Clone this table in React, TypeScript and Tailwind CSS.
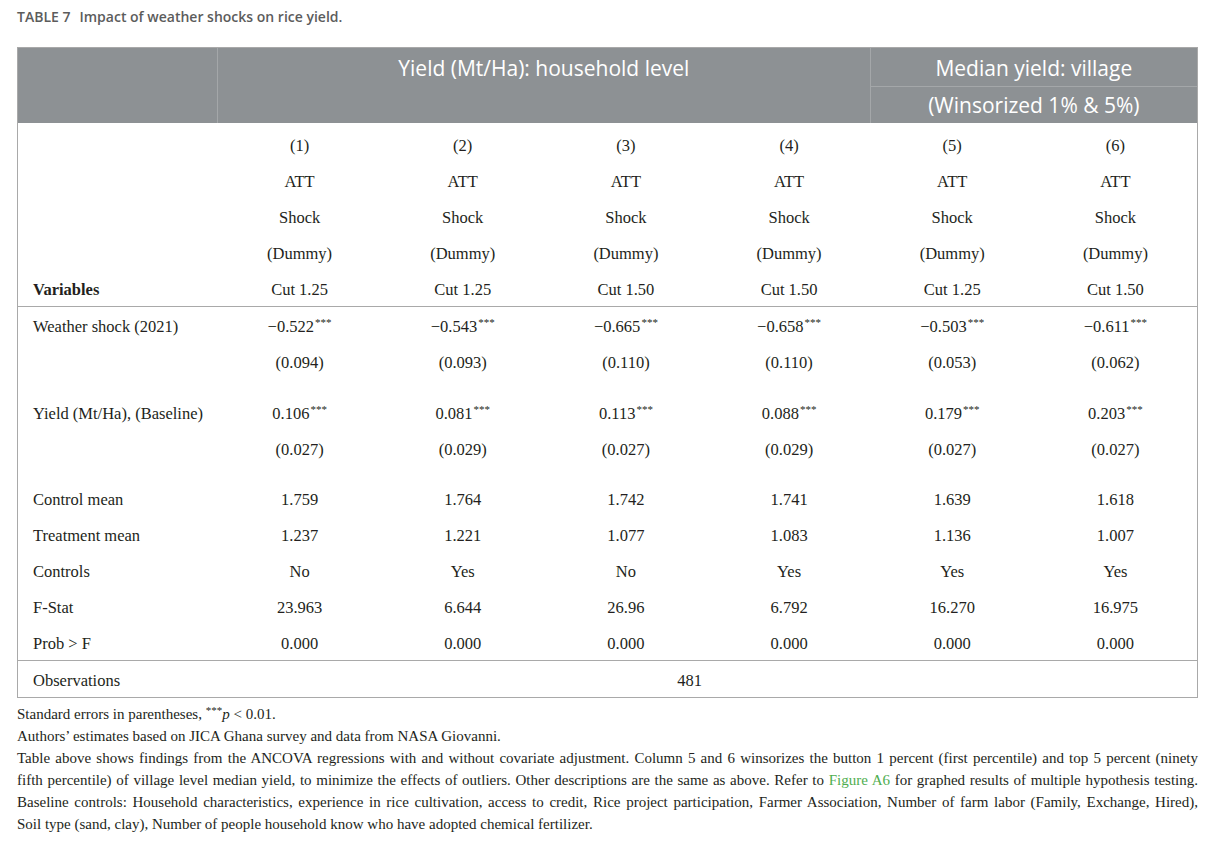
const heads = ["(1)", "(2)", "(3)", "(4)", "(5)", "(6)"];
const cuts = ["Cut 1.25", "Cut 1.25", "Cut 1.50", "Cut 1.50", "Cut 1.25", "Cut 1.50"];

const coefs = [
  {
    label: "Weather shock (2021)",
    vals: ["\u22120.522", "\u22120.543", "\u22120.665", "\u22120.658", "\u22120.503", "\u22120.611"],
    se: ["(0.094)", "(0.093)", "(0.110)", "(0.110)", "(0.053)", "(0.062)"],
  },
  {
    label: "Yield (Mt/Ha), (Baseline)",
    vals: ["0.106", "0.081", "0.113", "0.088", "0.179", "0.203"],
    se: ["(0.027)", "(0.029)", "(0.027)", "(0.029)", "(0.027)", "(0.027)"],
  },
];

const stats = [
  { label: "Control mean", vals: ["1.759", "1.764", "1.742", "1.741", "1.639", "1.618"] },
  { label: "Treatment mean", vals: ["1.237", "1.221", "1.077", "1.083", "1.136", "1.007"] },
  { label: "Controls", vals: ["No", "Yes", "No", "Yes", "Yes", "Yes"] },
  { label: "F-Stat", vals: ["23.963", "6.644", "26.96", "6.792", "16.270", "16.975"] },
  { label: "Prob > F", vals: ["0.000", "0.000", "0.000", "0.000", "0.000", "0.000"] },
];

function Row({ label, cells, bold }: { label?: string; cells: React.ReactNode[]; bold?: boolean }) {
  return (
    <div className="grid grid-cols-[200px_repeat(6,1fr)] items-center h-9 pt-[4px]">
      <div className={`pl-[15px] ${bold ? "font-bold" : ""}`}>{label}</div>
      {cells.map((c, i) => (
        <div key={i} className="text-center">{c}</div>
      ))}
    </div>
  );
}

const stars = <sup className="text-[11px] align-top leading-none relative top-[2px] ml-px">***</sup>;

export default function App() {
  return (
    <div className="w-[1217px] h-[844px] bg-white pt-[7px] px-[17px] overflow-hidden">
      <div className="font-['Open_Sans',sans-serif] text-[14px] leading-5 font-semibold text-[#5c5c5c]">
        TABLE 7<span className="ml-[9px]">Impact of weather shocks on rice yield.</span>
      </div>

      <div className="mt-5 w-[1181px] border border-[#a9a9a9] font-['Liberation_Serif',serif] text-[16.5px] text-[#231f20]">
        <div className="grid grid-cols-[200px_repeat(6,1fr)] grid-rows-[39px_36px] bg-[#8d9194] text-white font-['Open_Sans',sans-serif] text-[21px]">
          <div className="row-span-2 border-r border-[#a4a7a9]"></div>
          <div className="col-span-4 row-span-2 border-r border-[#a4a7a9] text-center pt-[6px] leading-7">
            Yield (Mt/Ha): household level
          </div>
          <div className="col-span-2 border-b border-[#a4a7a9] flex items-center justify-center pt-[3px]">
            Median yield: village
          </div>
          <div className="col-span-2 flex items-center justify-center pt-[1px]">(Winsorized 1% &amp; 5%)</div>
        </div>

        <div className="border-b border-[#a9a9a9] pt-[3px]">
          <Row cells={heads} />
          <Row cells={heads.map(() => "ATT")} />
          <Row cells={heads.map(() => "Shock")} />
          <Row cells={heads.map(() => "(Dummy)")} />
          <Row label="Variables" bold cells={cuts} />
        </div>

        {coefs.map((c) => (
          <div key={c.label} className="pb-[15px]">
            <Row
              label={c.label}
              cells={c.vals.map((v) => (
                <span>
                  {v}
                  {stars}
                </span>
              ))}
            />
            <Row cells={c.se} />
          </div>
        ))}

        <div className="border-b border-[#a9a9a9] -mt-px">
          {stats.map((s) => (
            <Row key={s.label} label={s.label} cells={s.vals} />
          ))}
        </div>

        <div className="grid grid-cols-[200px_1fr] items-center h-9 pt-[5px]">
          <div className="pl-[15px]">Observations</div>
          <div className="text-center pr-[36px]">481</div>
        </div>
      </div>

      <div className="mt-[5px] w-[1181px] font-['Liberation_Serif',serif] text-[15px] leading-[22px] text-[#231f20]">
        <p>
          Standard errors in parentheses, <sup className="text-[11px]">***</sup>
          <i>p</i> &lt; 0.01.
        </p>
        <p>Authors’ estimates based on JICA Ghana survey and data from NASA Giovanni.</p>
        <p className="text-justify [text-align-last:justify]">
          Table above shows findings from the ANCOVA regressions with and without covariate adjustment. Column 5 and 6 winsorizes the button 1 percent (first percentile) and top 5 percent (ninety
        </p>
        <p className="text-justify [text-align-last:justify]">
          fifth percentile) of village level median yield, to minimize the effects of outliers. Other descriptions are the same as above. Refer to{" "}
          <span className="text-[#4fae4f]">Figure A6</span> for graphed results of multiple hypothesis testing.
        </p>
        <p className="text-justify [text-align-last:justify]">
          Baseline controls: Household characteristics, experience in rice cultivation, access to credit, Rice project participation, Farmer Association, Number of farm labor (Family, Exchange, Hired),
        </p>
        <p>Soil type (sand, clay), Number of people household know who have adopted chemical fertilizer.</p>
      </div>
    </div>
  );
}
